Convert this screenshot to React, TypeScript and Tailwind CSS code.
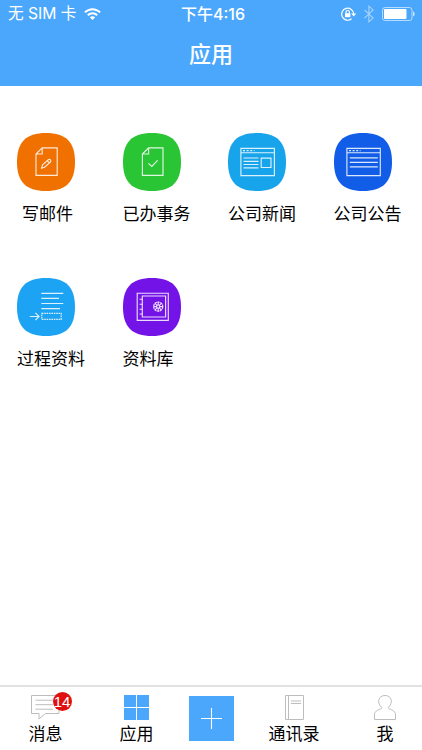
import React from 'react';

interface AppItem {
  label: string;
  color: string;
  indent?: boolean;
  glyph: React.ReactNode;
}

const apps: AppItem[] = [
  {
    label: '写邮件',
    color: '#f07000',
    indent: true,
    glyph: (
      <>
        <path d="M25.2 14.8H40.2V42.3H19V21Z M25.2 14.8V21H19" />
        <path d="M24.6 35.2l1-3.4 6-5.2c1.4-.7 2.8.7 2 2.2l-6 5.4z M30.4 27.8l2 2" />
      </>
    ),
  },
  {
    label: '已办事务',
    color: '#2ac534',
    glyph: (
      <>
        <path d="M25.6 14.8H40V42.3H19.4V21Z M25.6 14.8V21H19.4" />
        <path d="M25.4 30.4l3.4 3.1 5.8-6.2" />
      </>
    ),
  },
  {
    label: '公司新闻',
    color: '#17a4ea',
    glyph: (
      <>
        <path d="M12.9 15.4H46.4V42.6H12.9Z M12.9 19.7H46.4" />
        <path d="M15 17.6H26.5" strokeDasharray="2 1.6" />
        <path d="M15.5 25H30.5M15.5 28.3H30.5M15.5 31.5H30.5M15.5 34.8H30.5M33.2 25.1H43V34.5H33.2Z" />
      </>
    ),
  },
  {
    label: '公司公告',
    color: '#125de8',
    glyph: (
      <>
        <path d="M12.9 15.4H46.3V42.6H12.9Z M12.9 19.7H46.3" />
        <path d="M15 17.6H26.5" strokeDasharray="2 1.6" />
        <path d="M15.8 24.8H43.8M15.8 29.3H43.8M15.8 33.9H43.8" />
      </>
    ),
  },
  {
    label: '过程资料',
    color: '#1da3f3',
    glyph: (
      <>
        <path d="M24.3 15.3H46.3M24.3 20.3H42M24.3 25.5H46.3M24.3 30.6H43" />
        <path d="M12.8 38.5H22M18.4 34.8l3.7 3.7-3.7 3.7" />
        <path d="M24.8 35.4H44.2V41.4H24.8Z" strokeDasharray="1.6 .8" />
      </>
    ),
  },
  {
    label: '资料库',
    color: '#7413e8',
    glyph: (
      <>
        <path d="M14.2 15.2H45.3V42.3H14.2Z M19.3 18H42.6V39H19.3Z" />
        <path d="M16.6 21.2H19.3M16.6 26.2H19.3M16.6 31.2H19.3M16.6 36H19.3" />
        <circle cx="35.2" cy="28.6" r="4.6" strokeDasharray="2.4 .5" />
        <circle cx="35.2" cy="28.6" r="1.6" />
        <path d="M35.2 24V27M35.2 30.2V33.2M30.6 28.6H33.6M36.8 28.6H39.8M32 25.4l2 2M36.4 29.8l2 2M38.4 25.4l-2 2M34 29.8l-2 2" />
      </>
    ),
  },
];

const StatusBar: React.FC = () => (
  <div className="flex h-7 items-center text-base leading-7">
    <div className="flex flex-1 items-center gap-2 pl-2">
      <span className="text-[15.7px] tracking-[-0.05px] whitespace-nowrap">无 SIM 卡</span>
      <svg width="17" height="12" viewBox="0 0 17 12" fill="none" stroke="white" strokeWidth="2">
        <path d="M.9 4.4C5.2.1 11.8.1 16.1 4.4M3.8 7.3c2.7-2.6 6.7-2.6 9.4 0" />
        <path d="M8.5 12L5.8 9.3c1.5-1.4 3.9-1.4 5.4 0z" fill="white" stroke="none" />
      </svg>
    </div>
    <span className="pl-[3px] text-base font-medium whitespace-nowrap">下午4:16</span>
    <div className="flex flex-1 items-center justify-end pr-[7px]">
      <svg className="mr-[7px]" width="16" height="14" viewBox="0 0 16 14" fill="none" stroke="white" strokeWidth="1.2">
        <path d="M10.6 11.8A6 6 0 1 1 12.7 7" />
        <path d="M10.2 6.5h5l-2.5 3z" fill="white" stroke="none" />
        <path d="M4 6.2h5.4v4H4z" fill="white" stroke="none" />
        <path d="M5 6.4V5.2a1.7 1.7 0 0 1 3.4 0v1.2" />
      </svg>
      <svg className="mr-2 opacity-50" width="10" height="18" viewBox="0 0 10 18" fill="none" stroke="white" strokeWidth="1.1">
        <path d="M.5 4.8l8.6 8.3-4.2 3.7V1.2l4.2 3.7L.5 13.1" />
      </svg>
      <svg width="33" height="14" viewBox="0 0 33 14" fill="none">
        <rect x=".5" y=".5" width="29.5" height="13" rx="2.6" stroke="white" strokeOpacity=".6" />
        <rect x="2" y="2" width="22.5" height="10" rx="1" fill="white" />
        <path d="M31 4.6c2.2.6 2.2 4.2 0 4.8z" fill="white" fillOpacity=".7" />
      </svg>
    </div>
  </div>
);

const AppIcon: React.FC<{ item: AppItem }> = ({ item }) => (
  <div className="flex h-[144.5px] flex-col items-start pl-[17px]">
    <svg width="58" height="58" viewBox="0 0 58 58" fill="none">
      <path d="M29 0C49 0 58 9 58 29S49 58 29 58 0 49 0 29 9 0 29 0Z" fill={item.color} />
      <g stroke="white" strokeOpacity=".85" strokeWidth="1.15">
        {item.glyph}
      </g>
    </svg>
    <span className={`mt-[11px] text-[17px] leading-6 whitespace-nowrap ${item.indent ? 'pl-[5px]' : ''}`}>
      {item.label}
    </span>
  </div>
);

const Tab: React.FC<{ label: string; children: React.ReactNode }> = ({ label, children }) => (
  <div className="flex flex-col items-center pt-2">
    <div className="relative h-[27px]">{children}</div>
    <span className="text-[17px] leading-6 whitespace-nowrap">{label}</span>
  </div>
);

const App: React.FC = () => {
  return (
    <div className="flex h-[750px] w-[422px] flex-col overflow-hidden bg-white font-[Inter,'Noto_Sans_CJK_SC',sans-serif] text-black">
      <header className="h-[86px] bg-[#4ba7fb] text-white">
        <StatusBar />
        <h1 className="pt-[10px] text-center text-[22px] leading-8 font-medium">应用</h1>
      </header>

      <main className="grid flex-1 grid-cols-4 content-start pt-[47px]">
        {apps.map((item) => (
          <AppIcon key={item.label} item={item} />
        ))}
      </main>

      <nav className="grid h-[65px] grid-cols-[91px_91px_58px_108px_74px] border-t-2 border-[#e2e2e2]">
        <Tab label="消息">
          <svg width="29" height="25" viewBox="0 0 29 25" fill="none" stroke="#bdbdbd">
            <path d="M.5.5H28V18.5H14.5L8 24V18.5H.5Z" />
            <path d="M4.5 5.2H22M4.5 9.7H22M4.5 14.2H22" />
          </svg>
          <span className="absolute -top-[3px] left-[21.5px] flex size-[19px] items-center justify-center rounded-full bg-[#e01010] font-['Liberation_Sans',sans-serif] text-[15px] leading-none text-white">
            14
          </span>
        </Tab>
        <Tab label="应用">
          <div className="grid size-[25px] grid-cols-2 gap-[1.5px]">
            <i className="bg-[#4ba7fb]" />
            <i className="bg-[#4ba7fb]" />
            <i className="bg-[#4ba7fb]" />
            <i className="bg-[#4ba7fb]" />
          </div>
        </Tab>
        <div className="flex justify-center pt-[9px]">
          <div className="flex size-[45px] items-center justify-center bg-[#4ba7fb]">
            <svg width="21" height="21" viewBox="0 0 21 21" stroke="white" strokeWidth="1.1">
              <path d="M10.5 0V21M0 10.5H21" />
            </svg>
          </div>
        </div>
        <Tab label="通讯录">
          <svg width="19" height="25" viewBox="0 0 19 25" fill="none" stroke="#bdbdbd">
            <path d="M.5.5H18.5V24.5H.5ZM3.5.5V24.5M6 6H16M6 8.5H16" />
          </svg>
        </Tab>
        <Tab label="我">
          <svg width="22" height="25" viewBox="0 0 22 25" fill="none" stroke="#bdbdbd">
            <path d="M7 13.8C8 13.4 8 12.7 7.3 12C2.5 7.5 4.5 .5 11 .5S19.5 7.5 14.7 12C14 12.7 14 13.4 15 13.8C19 15.2 21.5 16.5 21.5 20V24.5H.5V20C.5 16.5 3 15.2 7 13.8Z" />
          </svg>
        </Tab>
      </nav>
    </div>
  );
};

export default App;
